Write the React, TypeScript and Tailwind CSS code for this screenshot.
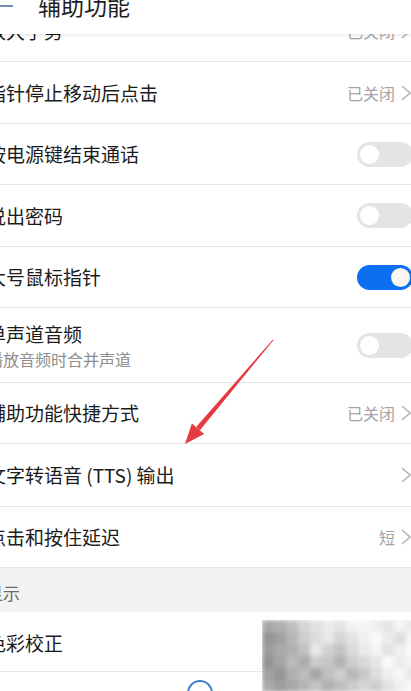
import type { ReactNode } from "react";

const FONT = { fontFamily: '"Noto Sans CJK SC", "Noto Sans", sans-serif' };

// grey levels for the blurred block in the lower right corner
const MOSAIC: number[][] = [
  [168, 176, 190, 214, 226, 236, 228, 242, 246, 238, 230, 244, 236],
  [150, 160, 182, 206, 220, 232, 214, 226, 240, 250, 236, 222, 246],
  [158, 170, 176, 194, 232, 210, 196, 218, 234, 244, 226, 240, 250],
  [148, 164, 186, 172, 204, 198, 180, 206, 216, 230, 250, 236, 244],
  [162, 150, 176, 188, 168, 192, 206, 184, 200, 222, 238, 246, 232],
  [170, 158, 168, 182, 196, 176, 190, 204, 214, 206, 226, 240, 248],
];

function Chevron() {
  return (
    <svg width="12" height="18" viewBox="0 0 12 18" className="ml-[5px] shrink-0">
      <path d="M2 2l8 7-8 7" fill="none" stroke="#b5b5b5" strokeWidth="1.6" />
    </svg>
  );
}

function Toggle({ on }: { on?: boolean }) {
  return (
    <div
      className={`flex h-[25px] w-[56px] items-center rounded-full px-[3px] ${
        on ? "justify-end bg-[#0a6ff0]" : "justify-start bg-[#e4e4e4]"
      }`}
    >
      <div className={`h-[19px] w-[19px] rounded-full ${on ? "bg-[#fbf7ee]" : "bg-white"}`} />
    </div>
  );
}

function Value({ text }: { text?: string }) {
  return (
    <div className="mr-[15px] flex items-center">
      {text ? <span className="text-[16px] text-[#a3a3a3]">{text}</span> : null}
      <Chevron />
    </div>
  );
}

function Row({
  title,
  sub,
  right,
  h,
  className = "",
}: {
  title: string;
  sub?: string;
  right?: ReactNode;
  h: string;
  className?: string;
}) {
  return (
    <div className={`flex items-center justify-between border-b border-[#e8e8e8] bg-white ${h} ${className}`}>
      <div className="flex flex-col">
        <span className="whitespace-nowrap text-[19px] leading-[24px] text-[#1b1b1b]">{title}</span>
        {sub ? (
          <span className="mt-[3px] whitespace-nowrap text-[16px] leading-[20px] text-[#8e8e8e]">{sub}</span>
        ) : null}
      </div>
      {right}
    </div>
  );
}

export default function App() {
  return (
    <div className="relative h-[691px] w-[411px] overflow-hidden bg-white" style={FONT}>
      <div className="ml-[-13px] w-[440px]">
        {/* title bar, scrolled so only its lower part shows */}
        <header className="relative z-10 flex h-[34px] items-start bg-white shadow-[0_2px_3px_rgba(0,0,0,0.08)]">
          <div className="mt-[5px] ml-[13px] h-[2px] w-[13px] bg-[#6f8fb4]" />
          <span className="ml-[25px] mt-[-10px] text-[23px] leading-[30px] text-[#1e1e1e]">辅助功能</span>
        </header>

        <div className="flex flex-col">
          <Row title="放大手势" h="h-[62px] -mt-[34px]" right={<Value text="已关闭" />} />
          <Row title="指针停止移动后点击" h="h-[62px]" right={<Value text="已关闭" />} />
          <Row title="按电源键结束通话" h="h-[61px]" right={<div className="mr-[14px]"><Toggle /></div>} />
          <Row title="说出密码" h="h-[62px]" right={<div className="mr-[14px]"><Toggle /></div>} />
          <Row title="大号鼠标指针" h="h-[61px]" right={<div className="mr-[14px]"><Toggle on /></div>} />
          <Row
            title="单声道音频"
            sub="播放音频时合并声道"
            h="h-[75px]"
            right={<div className="mr-[14px]"><Toggle /></div>}
          />
          <Row title="辅助功能快捷方式" h="h-[61px]" right={<Value text="已关闭" />} />
          <Row title="文字转语音 (TTS) 输出" h="h-[63px]" right={<Value />} />
          <Row title="点击和按住延迟" h="h-[61px]" right={<Value text="短" />} />

          <div className="flex h-[44px] items-center bg-[#f2f2f2] pt-[6px]">
            <span className="ml-[-1px] text-[17px] text-[#6a6a6a]">显示</span>
          </div>

          <Row title="色彩校正" h="h-[60px]" className="pt-[3px]" />
          <div className="h-[40px] bg-white" />
        </div>
      </div>

      {/* pixelated block */}
      <div className="absolute left-[262px] top-[620px] h-[72px] w-[156px] overflow-hidden">
        <div className="grid grid-cols-[repeat(13,12px)] grid-rows-[repeat(6,12px)] blur-[2px]">
          {MOSAIC.flatMap((line, r) =>
            line.map((g, c) => (
              <div key={`${r}-${c}`} style={{ backgroundColor: `rgb(${g},${g},${g})` }} />
            ))
          )}
        </div>
      </div>

      {/* annotation arrow and the ring peeking from the next row */}
      <svg className="pointer-events-none absolute left-0 top-0" width="411" height="691">
        <polygon points="273.4,340.3 272.6,339.7 196.1,427.1 199.9,430.3" fill="#e63a41" />
        <polygon points="185,444 191.9,423.5 204.1,433.9" fill="#e63a41" />
        <circle cx="200" cy="693" r="12" fill="none" stroke="#3f7fc8" strokeWidth="2" />
      </svg>
    </div>
  );
}
